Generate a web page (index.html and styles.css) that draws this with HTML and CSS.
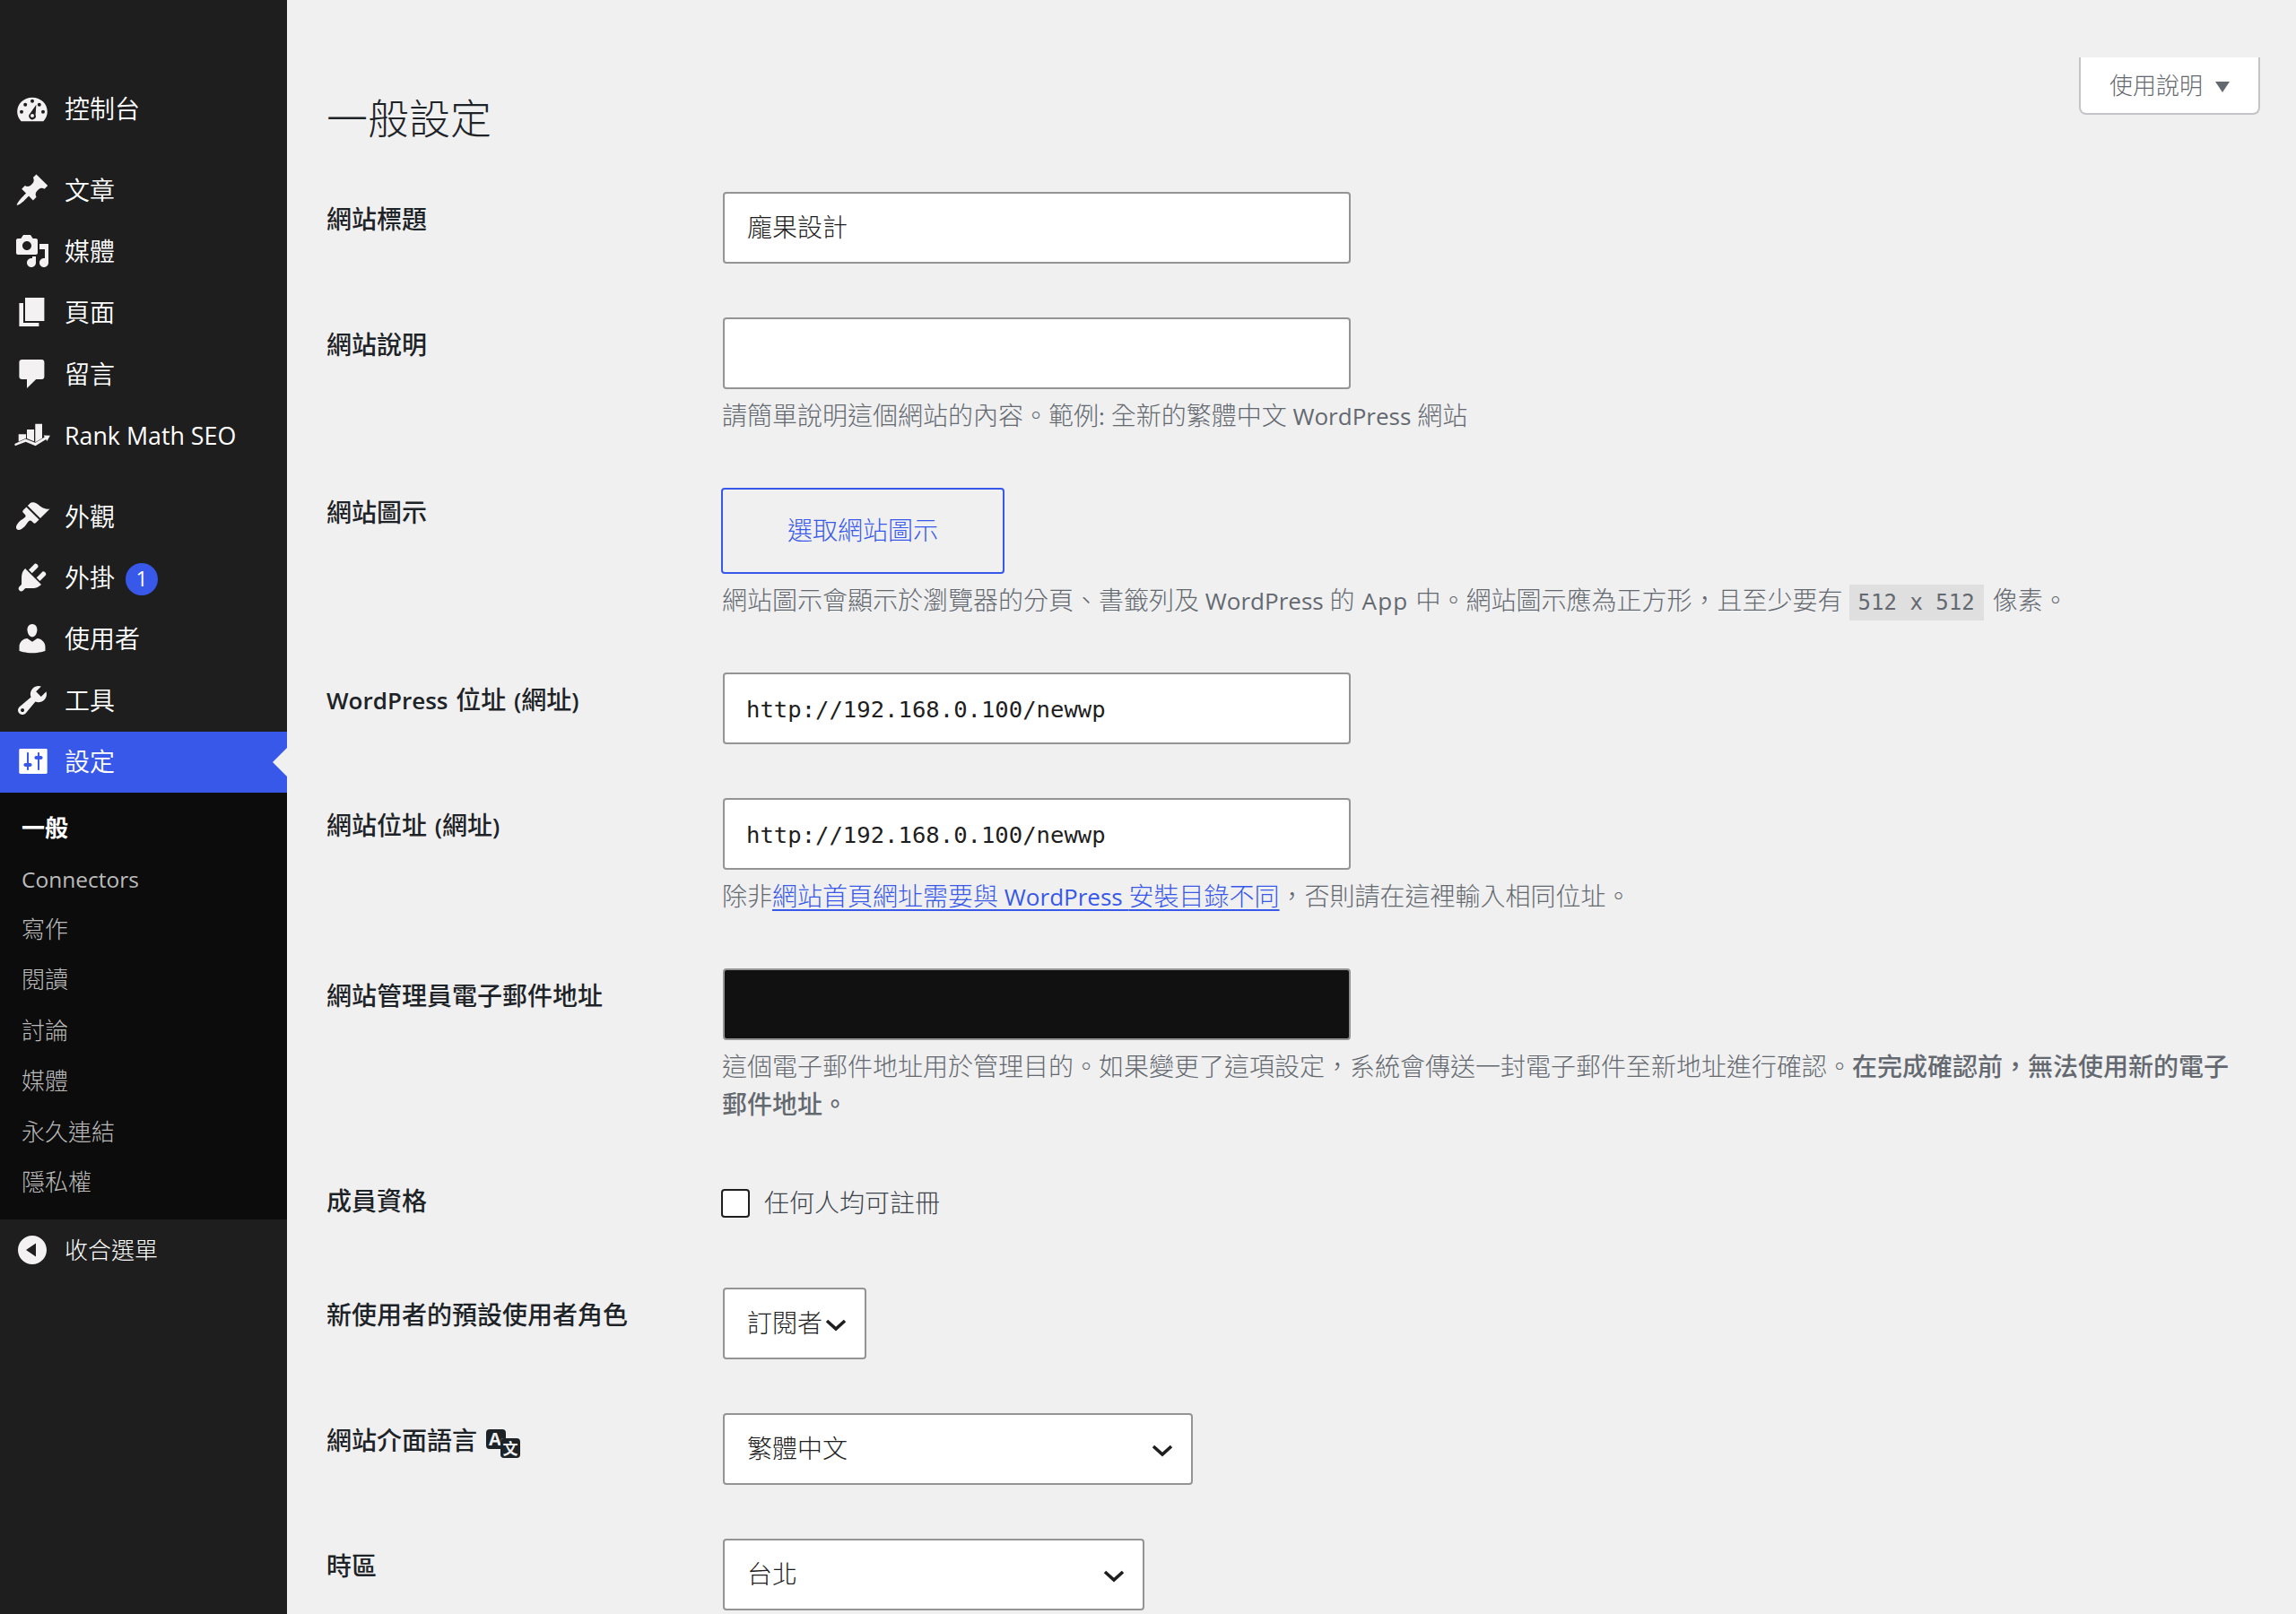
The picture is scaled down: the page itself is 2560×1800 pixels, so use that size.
FILE: index.html
```html
<!DOCTYPE html>
<html lang="zh-Hant-TW">
<head>
  <meta charset="UTF-8" />
  <meta name="viewport" content="width=device-width, initial-scale=1.0"/>
  <title>一般設定</title>
  <link rel="stylesheet" href="styles.css">
</head>

<body>
  <nav class="admin-menu">
    <ul class="menu">
      <li><a href="#">
        <svg class="icon" viewBox="0 0 20 20"><path fill-rule="evenodd" d="M3.8 17.1h12.4c1.4-1.5 2.2-3.3 2.2-5.3C18.400 7.300 14.700 3.900 10 3.900S1.600 7.300 1.600 11.800c0 2 .8 3.800 2.200 5.300zM10 4.900a1 1 0 1 1 0 2 1 1 0 0 1 0-2zM6.100 6.900a1 1 0 1 1 0 2 1 1 0 0 1 0-2zM13.900 6.900a1 1 0 1 1 0 2 1 1 0 0 1 0-2zM4 10.900a1 1 0 1 1 0 2 1 1 0 0 1 0-2zM16 10.900a1 1 0 1 1 0 2 1 1 0 0 1 0-2zM12.200 7.900l-.4 5.600a1.900 1.900 0 1 1-3-.7zM10 13a1 1 0 1 0 0 2 1 1 0 0 0 0-2z"/></svg>
        <span>控制台</span></a></li>
      <li class="separator"></li>
      <li><a href="#">
        <svg class="icon" viewBox="0 0 20 20"><path d="M10.440 3.020l1.820-1.820 6.360 6.350-1.830 1.820c-1.050-.68-2.480-.57-3.410.36l-.75.75c-.92.93-1.040 2.350-.35 3.410l-1.830 1.820-2.410-2.410-2.800 2.790c-.42.42-3.380 2.710-3.800 2.290s1.860-3.390 2.280-3.810l2.790-2.790L4.100 9.360l1.830-1.820c1.050.69 2.480.57 3.400-.36l.75-.75c.93-.92 1.050-2.350.36-3.410z"/></svg>
        <span>文章</span></a></li>
      <li><a href="#">
        <svg class="icon" viewBox="0 0 20 20"><path d="M13 11V4c0-.55-.45-1-1-1h-1.670L9 1H5L3.670 3H2c-.55 0-1 .45-1 1v7c0 .55.45 1 1 1h10c.55 0 1-.45 1-1zM7 4.500c1.380 0 2.500 1.120 2.500 2.500S8.380 9.500 7 9.500 4.500 8.380 4.500 7 5.620 4.500 7 4.500zM14 6h5v10.500c0 1.380-1.120 2.500-2.500 2.500S14 17.880 14 16.500s1.120-2.500 2.500-2.500c.17 0 .34.02.5.05V9h-3V6zm-4 8.050V13h2v3.500c0 1.380-1.120 2.500-2.500 2.500S7 17.880 7 16.500 8.120 14 9.500 14c.17 0 .34.02.5.05z"/></svg>
        <span>媒體</span></a></li>
      <li><a href="#">
        <svg class="icon" viewBox="0 0 20 20"><path d="M6 15V2h10.700v13H6zm-1 1h8.700v2H2.700V5H5v11z"/></svg>
        <span>頁面</span></a></li>
      <li><a href="#">
        <svg class="icon" viewBox="0 0 20 20"><path d="M4.300 2h11c.8 0 1.400.6 1.400 1.500v8c0 .9-.6 1.500-1.400 1.500h-3.200L7 18v-5H4.300c-1 0-1.600-.6-1.600-1.500v-8c0-.9.6-1.500 1.600-1.500z"/></svg>
        <span>留言</span></a></li>
      <li><a href="#">
        <svg class="icon" viewBox="0 0 40 40"><path d="M4.700 19.300H13v4.500l-8.300 3.700zM14 14h8v13.300l-8-3.300zM23.300 7.700H31v16l-7.700 4.500z"/><path d="M.3 30l12.200-5.500 10.800 4.300 10.500-6.300-1.200-1.900 7.300.2-3.500 6.200-1.100-1.900-11.800 7.100-10.800-4.400L.8 32.200z"/></svg>
        <span class="en">Rank Math SEO</span></a></li>
      <li class="separator"></li>
      <li><a href="#">
        <svg class="icon" viewBox="0 0 20 20"><path d="M14.480 11.060L7.410 3.990l1.500-1.500c.5-.56 2.300-.47 3.510.32 1.210.8 1.430 1.280 2.910 2.100 1.180.64 2.450 1.260 4.450.85zm-.71.71L6.700 4.700 4.930 6.470c-.39.39-.39 1.020 0 1.410l1.060 1.060c.39.39.39 1.030 0 1.420-.6.6-1.430 1.110-2.210 1.690-.35.26-.7.53-1.010.84C1.430 14.230.4 16.080 1.400 17.070c.99 1 2.840-.03 4.180-1.360.31-.31.58-.66.85-1.020.57-.78 1.080-1.610 1.690-2.210.39-.39 1.020-.39 1.410 0l1.060 1.060c.39.39 1.020.39 1.410 0z"/></svg>
        <span>外觀</span></a></li>
      <li><a href="#">
        <svg class="icon" viewBox="0 0 20 20"><path d="M13.110 4.360L9.870 7.600 8 5.730l3.240-3.240c.35-.34 1.050-.2 1.560.32.52.51.66 1.210.31 1.550zm-8 1.770l.91-1.120 9.010 9.010-1.190.84c-.71.71-2.630 1.160-3.820 1.160H6.140L4.900 17.260c-.59.59-1.540.59-2.120 0-.59-.58-.59-1.530 0-2.120l1.240-1.240v-3.880c0-1.130.4-3.190 1.090-3.890zm7.260 3.970l3.240-3.240c.34-.35 1.040-.21 1.550.31.52.51.66 1.210.31 1.550l-3.240 3.250z"/></svg>
        <span>外掛</span><span class="update-count">1</span></a></li>
      <li><a href="#">
        <svg class="icon" viewBox="0 0 20 20"><path d="M10 9.250c-2.270 0-2.730-3.440-2.730-3.440C7 4.020 7.820 2 9.970 2c2.160 0 2.980 2.020 2.710 3.810 0 0-.41 3.440-2.680 3.440zm0 2.570L12.720 10c2.390 0 4.520 2.330 4.520 4.530v2.490s-3.650 1.130-7.240 1.130c-3.650 0-7.240-1.130-7.240-1.130v-2.490c0-2.250 1.940-4.480 4.470-4.480z"/></svg>
        <span>使用者</span></a></li>
      <li><a href="#">
        <svg class="icon" viewBox="0 0 20 20"><path d="M16.680 9.770c-1.340 1.340-3.300 1.670-4.950.99l-5.410 6.520c-.99.99-2.590.99-3.580 0s-.99-2.590 0-3.570l6.520-5.420c-.68-1.650-.35-3.610.99-4.950 1.280-1.280 3.120-1.620 4.720-1.060l-2.890 2.890 2.820 2.820 2.860-2.870c.53 1.580.18 3.390-1.080 4.650zM3.810 16.210c.4.39 1.040.39 1.430 0 .4-.4.4-1.040 0-1.430-.39-.4-1.030-.4-1.430 0-.39.39-.39 1.030 0 1.430z"/></svg>
        <span>工具</span></a></li>
      <li class="current"><a href="#">
        <svg class="icon" viewBox="0 0 20 20"><path d="M18.350 16.300V3.700c0-.4-.3-.7-.7-.7H3.350c-.4 0-.7.3-.7.7v12.600c0 .4.300.7.7.7h14.300c.4 0 .7-.3.7-.7zM8 11h.8c.55 0 1 .45 1 1s-.45 1-1 1H8v1.500c0 .28-.22.5-.5.5s-.5-.22-.5-.5V13h-.8c-.55 0-1-.45-1-1s.45-1 1-1H7V5.500c0-.28.22-.5.5-.5s.5.22.5.5V11zm5-2h-.8c-.55 0-1-.45-1-1s.45-1 1-1h.8V5.500c0-.28.22-.5.5-.5s.5.22.5.5V7h.8c.55 0 1 .45 1 1s-.45 1-1 1H14v5.500c0 .28-.22.5-.5.5s-.5-.22-.5-.5V9z"/></svg>
        <span>設定</span></a>
        <ul class="submenu">
          <li class="active"><a href="#">一般</a></li>
          <li><a href="#" class="en">Connectors</a></li>
          <li><a href="#">寫作</a></li>
          <li><a href="#">閱讀</a></li>
          <li><a href="#">討論</a></li>
          <li><a href="#">媒體</a></li>
          <li><a href="#">永久連結</a></li>
          <li><a href="#">隱私權</a></li>
        </ul>
      </li>
      <li class="collapse"><a href="#">
        <svg class="icon" viewBox="0 0 20 20"><path d="M10 2c4.400 0 8 3.600 8 8s-3.600 8-8 8-8-3.600-8-8 3.600-8 8-8zm2 4.200L6.500 10l5.500 3.800z"/></svg>
        <span>收合選單</span></a></li>
    </ul>
  </nav>

  <main class="content">
    <button type="button" class="help-tab">使用說明
      <svg class="help-arrow" viewBox="0 0 16 12"><path d="M0 0h16L8 12z"/></svg>
    </button>

    <h1>一般設定</h1>

    <form class="form-table">
      <div class="row">
        <label for="blogname">網站標題</label>
        <div class="field"><input type="text" id="blogname" value="龐果設計"></div>
      </div>
      <div class="row">
        <label for="blogdescription">網站說明</label>
        <div class="field">
          <input type="text" id="blogdescription">
          <p>請簡單說明這個網站的內容。範例<span class="en">: </span>全新的繁體中文<span class="en"> WordPress </span>網站</p>
        </div>
      </div>
      <div class="row site-icon">
        <label>網站圖示</label>
        <div class="field">
          <button type="button" class="choose-icon">選取網站圖示</button>
          <p>網站圖示會顯示於瀏覽器的分頁、書籤列及<span class="en"> WordPress </span>的<span class="en app"> App </span>中。網站圖示應為正方形，且至少要有 <code>512 x 512</code> 像素。</p>
        </div>
      </div>
      <div class="row">
        <label for="siteurl"><span class="en">WordPress </span>位址<span class="en"> (</span>網址<span class="en">)</span></label>
        <div class="field"><input type="url" id="siteurl" class="code" value="http://192.168.0.100/newwp"></div>
      </div>
      <div class="row">
        <label for="home">網站位址<span class="en"> (</span>網址<span class="en">)</span></label>
        <div class="field">
          <input type="url" id="home" class="code" value="http://192.168.0.100/newwp">
          <p>除非<a href="#">網站首頁網址需要與<span class="en"> WordPress </span>安裝目錄不同</a>，否則請在這裡輸入相同位址。</p>
        </div>
      </div>
      <div class="row">
        <label for="new_admin_email">網站管理員電子郵件地址</label>
        <div class="field">
          <input type="email" id="new_admin_email" class="masked">
          <p>這個電子郵件地址用於管理目的。如果變更了這項設定，系統會傳送一封電子郵件至新地址進行確認。<strong>在完成確認前，無法使用新的電子郵件地址。</strong></p>
        </div>
      </div>
      <div class="row membership">
        <label for="users_can_register">成員資格</label>
        <div class="field check">
          <input type="checkbox" id="users_can_register">
          <span>任何人均可註冊</span>
        </div>
      </div>
      <div class="row">
        <label for="default_role">新使用者的預設使用者角色</label>
        <div class="field"><select id="default_role" class="role"><option>訂閱者</option></select></div>
      </div>
      <div class="row">
        <label for="WPLANG">網站介面語言
          <svg class="translate" viewBox="0 0 38 32">
            <path d="M4 0h14q4 0 4 4v6h-2q-4 0-4 4v8H4q-4 0-4-4V4q0-4 4-4z"/>
            <text x="3" y="18" class="glyph">A</text>
            <rect x="16" y="10" width="22" height="22" rx="4"/>
            <text x="18.500" y="27.500" class="glyph cjk">文</text>
          </svg>
        </label>
        <div class="field"><select id="WPLANG" class="lang"><option>繁體中文</option></select></div>
      </div>
      <div class="row">
        <label for="timezone_string">時區</label>
        <div class="field"><select id="timezone_string" class="zone"><option>台北</option></select></div>
      </div>
    </form>
  </main>
</body>
</html>
```
FILE: styles.css
```css
* {
  box-sizing: border-box;
}

body {
  margin: 0;
  height: 1800px;
  overflow: hidden;
  display: flex;
  background: #f0f0f0;
  color: #3c434a;
  font-family: "Noto Sans CJK TC", sans-serif;
  font-size: 28px;
  font-weight: 300;
  line-height: 42px;
}

a {
  color: #3858e9;
  text-underline-offset: 4px;
  text-decoration-thickness: 2px;
}

.en {
  font-family: "Open Sans", "Noto Sans", sans-serif;
  font-size: 0.93em;
  font-weight: 400;
  line-height: 1;
}

/* sidebar */
.admin-menu {
  flex: 0 0 320px;
  height: 1800px;
  padding-top: 88px;
  background: #1e1e1e;
}

.menu,
.submenu {
  list-style: none;
  margin: 0;
  padding: 0;
}

.menu > li > a {
  display: flex;
  align-items: center;
  height: 68.4px;
  padding: 0 0 2px 16px;
  color: #fff;
  font-weight: 350;
  text-decoration: none;
}

.menu a span {
  position: relative;
  top: -1px;
}

.menu span.en {
  top: 1px;
  font-size: 26.8px;
}

.menu .separator {
  height: 22px;
}

.icon {
  width: 40px;
  height: 40px;
  margin-right: 16px;
  fill: #f3f1f1;
}

.menu a .update-count {
  top: 2px;
  width: 36px;
  height: 36px;
  margin-left: 12px;
  border-radius: 50%;
  background: #3858e9;
  font-family: "Open Sans", sans-serif;
  font-size: 23px;
  font-weight: 500;
  line-height: 35px;
  text-align: center;
}

.current > a {
  position: relative;
  background: #3858e9;
}

.current > a::after {
  content: "";
  position: absolute;
  right: 0;
  top: 18px;
  border: 16px solid transparent;
  border-left-width: 0;
  border-right-color: #f0f0f0;
}

.current .icon {
  fill: #fff;
}

.submenu {
  padding: 10px 0 15px;
  background: #0c0c0c;
}

.submenu a {
  display: block;
  height: 56.4px;
  padding-left: 24px;
  color: #bbb;
  font-size: 26px;
  line-height: 56px;
  text-decoration: none;
}

.submenu a.en {
  font-size: 24.5px;
  line-height: 59px;
}

.submenu .active a {
  color: #fff;
  font-weight: 700;
}

.menu .collapse a {
  font-size: 26px;
  font-weight: 300;
}

/* content */
.content {
  flex: 1;
  padding: 0 40px 0 44px;
}

.help-tab {
  display: flex;
  align-items: center;
  gap: 14px;
  width: 202px;
  height: 64px;
  margin: 64px 0 0 auto;
  padding: 0 0 3px 32px;
  background: #fff;
  border: 2px solid #c3c4c7;
  border-top: none;
  border-radius: 0 0 8px 8px;
  color: #646970;
  font-family: inherit;
  font-size: 26px;
  font-weight: 300;
}

.help-arrow {
  width: 16px;
  height: 12px;
  margin-top: 7px;
  fill: #646970;
}

h1 {
  margin: -31px 0 23px;
  color: #1d2327;
  font-size: 46px;
  font-weight: 300;
  line-height: 64px;
}

.row {
  display: flex;
  padding: 30px 20px 30px 0;
}

.row label {
  flex: 0 0 440px;
  padding-top: 8px;
  color: #1d2327;
  font-weight: 500;
}

.row label .en {
  font-weight: 600;
  word-spacing: 2px;
}

.row.site-icon label {
  padding-top: 5px;
}

.field {
  flex: 1;
}

.field p {
  margin: 7px 0 1px;
  padding-left: 1px;
  color: #646970;
}

.field .app {
  letter-spacing: 1.2px;
}

.field strong {
  font-weight: 500;
}

.field input[type="text"],
.field input[type="url"],
.field input[type="email"],
select {
  display: block;
  width: 700px;
  height: 80px;
  margin: 0 0 0 2px;
  padding: 0 25px 4px;
  border: 2px solid #949494;
  border-radius: 4px;
  background: #fff;
  color: #1e1e1e;
  font-family: inherit;
  font-size: 28px;
  font-weight: 300;
}

.field input.code {
  padding: 3px 24px 1px;
  font-family: "DejaVu Sans Mono", monospace;
  font-size: 25.6px;
  font-weight: 400;
}

.field input.masked {
  background: #111;
}

.choose-icon {
  display: block;
  width: 316px;
  height: 96px;
  padding: 0 0 4px;
  border: 2px solid #3858e9;
  border-radius: 4px;
  background: transparent;
  color: #3858e9;
  font-family: inherit;
  font-size: 28px;
  font-weight: 300;
}

code {
  margin: 0 4px 0 1px;
  padding: 6px 10px;
  background: #dfdfe0;
  font-family: "DejaVu Sans Mono", monospace;
  font-size: 24px;
  line-height: 1;
}

.membership {
  height: 124px;
}

.row.membership label {
  padding-top: 5px;
}

.check {
  display: flex;
  align-items: center;
  gap: 16px;
  height: 60px;
}

.check span {
  padding-bottom: 4px;
}

.check input {
  appearance: none;
  width: 32px;
  height: 32px;
  margin: 0;
  border: 2px solid #1e1e1e;
  border-radius: 4px;
  background: #fff;
}

select {
  appearance: none;
  background: #fff url("data:image/svg+xml,%3Csvg xmlns='http://www.w3.org/2000/svg' viewBox='0 0 24 14'%3E%3Cpath d='M2 2l10 9L22 2' fill='none' stroke='%231e1e1e' stroke-width='3.6'/%3E%3C/svg%3E") no-repeat right 20px top 33px / 24px 14px;
}

.field select.role { width: 160px; padding-right: 0; }
.field select.lang { width: 524px; }
.field select.zone { width: 470px; }

.translate {
  width: 38px;
  height: 32px;
  margin: -8px 0 -8px 4px;
  vertical-align: -1px;
  overflow: visible;
  fill: #1d2327;
}

.glyph {
  fill: #f0f0f0;
  font-family: "Open Sans", sans-serif;
  font-size: 20px;
  font-weight: 700;
}

.glyph.cjk {
  font-family: "Noto Sans CJK TC", sans-serif;
  font-size: 17px;
}
```
